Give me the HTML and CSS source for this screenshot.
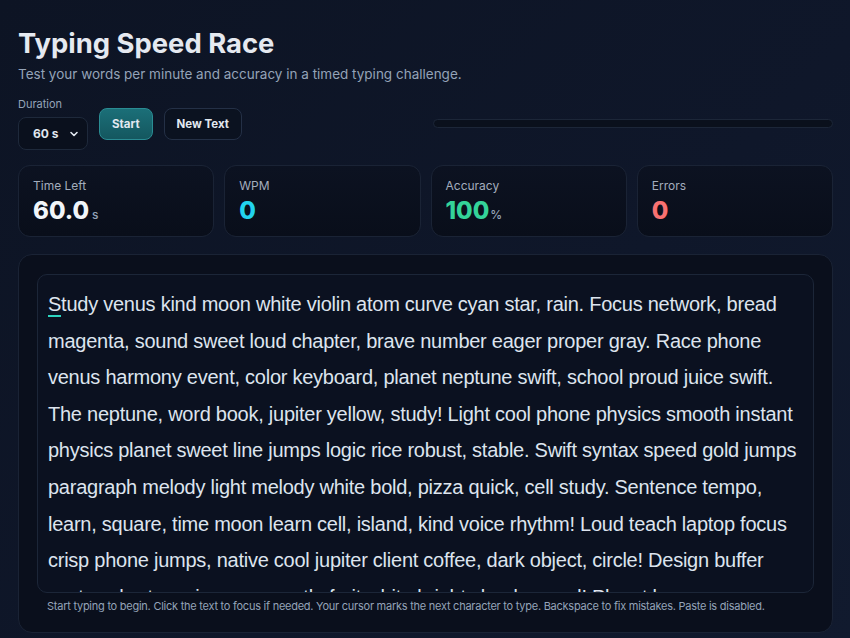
FILE: index.html
```html
<!DOCTYPE html>
<html lang="en">
<head>
  <meta charset="UTF-8" />
  <meta name="viewport" content="width=device-width, initial-scale=1.0"/>
  <title>Typing Speed Race</title>
  <link rel="stylesheet" href="styles.css">
</head>
<body>
  <div class="app">
    <h1>Typing Speed Race</h1>
    <p class="subtitle">Test your words per minute and accuracy in a timed typing challenge.</p>

    <div class="controls">
      <div class="field">
        <label for="duration">Duration</label>
        <div class="select">
          <span>60 s</span>
          <svg width="12" height="12" viewBox="0 0 12 12"><path d="M3 4.5l3 3 3-3" fill="none" stroke="#e2e8f0" stroke-width="1.6" stroke-linecap="round" stroke-linejoin="round"/></svg>
        </div>
      </div>
      <button class="btn btn-primary">Start</button>
      <button class="btn">New Text</button>
      <div class="progress"><div class="progress-fill" style="width: 0%"></div></div>
    </div>

    <div class="stats">
      <div class="stat">
        <div class="stat-label">Time Left</div>
        <div class="stat-value">60.0<span class="unit">s</span></div>
      </div>
      <div class="stat">
        <div class="stat-label">WPM</div>
        <div class="stat-value wpm">0</div>
      </div>
      <div class="stat">
        <div class="stat-label">Accuracy</div>
        <div class="stat-value acc">100<span class="unit">%</span></div>
      </div>
      <div class="stat">
        <div class="stat-label">Errors</div>
        <div class="stat-value err">0</div>
      </div>
    </div>

    <div class="panel">
      <div class="text-box"><span class="cursor">S</span>tudy venus kind moon white violin atom curve cyan star, rain. Focus network, bread magenta, sound sweet loud chapter, brave number eager proper gray. Race phone venus harmony event, color keyboard, planet neptune swift, school proud juice swift. The neptune, word book, jupiter yellow, study! Light cool phone physics smooth instant physics planet sweet line jumps logic rice robust, stable. Swift syntax speed gold jumps paragraph melody light melody white bold, pizza quick, cell study. Sentence tempo, learn, square, time moon learn cell, island, kind voice rhythm! Loud teach laptop focus crisp phone jumps, native cool jupiter client coffee, dark object, circle! Design buffer syntax short music wave, gentle fruit white bright cloud, sound! Planet learn green cosmic laptop energy.</div>
      <p class="hint">Start typing to begin. Click the text to focus if needed. Your cursor marks the next character to type. Backspace to fix mistakes. Paste is disabled.</p>
    </div>
  </div>
</body>
</html>
```

FILE: styles.css
```css
* {
  box-sizing: border-box;
}

body {
  margin: 0;
  padding: 24px 17px 0 18px;
  font-family: Inter, "Noto Sans", sans-serif;
  background: linear-gradient(135deg, #0d1424 0%, #0f172a 60%, #111a2e 100%);
  color: #e2e8f0;
  height: 638px;
  overflow: hidden;
}

h1 {
  margin: 0;
  font-size: 27.4px;
  line-height: 38px;
  font-weight: 700;
  color: #e5e9f0;
}

.subtitle {
  margin: 2px 0 0;
  font-size: 13.5px;
  line-height: 20px;
  color: #94a3b8;
}

.controls {
  display: flex;
  align-items: center;
  gap: 11px;
  margin-top: 13px;
}

.field {
  display: flex;
  flex-direction: column;
  gap: 6px;
}

.field label {
  font-size: 11px;
  line-height: 14px;
  color: #94a3b8;
}

.select {
  width: 70px;
  height: 33px;
  display: flex;
  align-items: center;
  justify-content: space-between;
  padding: 0 7px 0 14px;
  background: #0a101d;
  border: 1px solid #1e293b;
  border-radius: 8px;
  font-size: 12px;
  font-weight: 700;
  color: #e2e8f0;
}

.btn {
  height: 32px;
  padding: 0 12px;
  background: #0b1220;
  border: 1px solid #243046;
  border-radius: 8px;
  color: #e2e8f0;
  font-family: inherit;
  font-size: 11.5px;
  font-weight: 700;
  cursor: pointer;
}

.btn-primary {
  background: linear-gradient(180deg, #1b6f78 0%, #14575f 100%);
  border-color: #2a8c93;
}

.progress {
  flex: 1;
  height: 9px;
  margin-left: 180px;
  background: #0a101c;
  border: 1px solid #1c2638;
  border-radius: 6px;
  overflow: hidden;
}

.progress-fill {
  height: 100%;
  background: #22d3ee;
}

.stats {
  display: grid;
  grid-template-columns: repeat(4, 1fr);
  gap: 10px;
  margin-top: 15px;
}

.stat {
  height: 72px;
  padding: 12px 14px;
  background: linear-gradient(180deg, #0c1221 0%, #090e1a 100%);
  border: 1px solid #1a2335;
  border-radius: 12px;
}

.stat-label {
  font-size: 12px;
  line-height: 16px;
  color: #a3adbd;
}

.stat-value {
  margin-top: 2px;
  font-size: 24px;
  line-height: 30px;
  font-weight: 800;
  color: #f1f5f9;
}

.unit {
  margin-left: 3px;
  font-size: 12px;
  font-weight: 500;
  color: #94a3b8;
}

.stat-value.acc .unit {
  margin-left: 1px;
}

.wpm {
  color: #22d3ee;
}

.acc {
  color: #34d399;
}

.err {
  color: #f87171;
}

.panel {
  margin-top: 17px;
  padding: 19px 18px 0;
  height: 379px;
  background: #0a0f1c;
  border: 1px solid #1a2335;
  border-radius: 14px;
}

.text-box {
  height: 319px;
  overflow: hidden;
  padding: 11px 10px 0 10px;
  background: #0b1120;
  border: 1px solid #1c2638;
  border-radius: 10px;
  font-family: "Liberation Sans", Arial, sans-serif;
  font-size: 20px;
  line-height: 36.6px;
  letter-spacing: -0.25px;
  color: #dde4ee;
}

.cursor {
  border-bottom: 2px solid #2dd4bf;
}

.hint {
  margin: 5px 0 0 10px;
  font-size: 11px;
  line-height: 16px;
  letter-spacing: -0.25px;
  color: #94a3b8;
}
```
